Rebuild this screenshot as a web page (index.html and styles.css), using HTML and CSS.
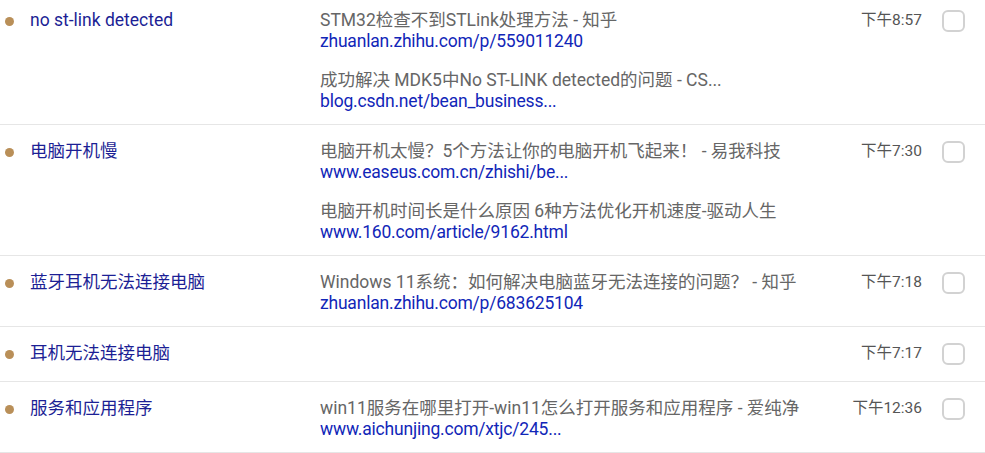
FILE: index.html
```html
<!DOCTYPE html>
<html lang="zh-CN">
<head>
<meta charset="utf-8">
<title>History</title>
<link rel="stylesheet" href="styles.css">
</head>
<body>
<div class="list">
  <div class="row">
    <span class="dot"></span>
    <div class="query">no st-link detected</div>
    <div class="results">
      <div class="result"><div class="rtitle">STM32检查不到STLink处理方法 - 知乎</div><div class="rlink">zhuanlan.zhihu.com/p/559011240</div></div>
      <div class="result"><div class="rtitle">成功解决 MDK5中No ST-LINK detected的问题 - CS...</div><div class="rlink">blog.csdn.net/bean_business...</div></div>
    </div>
    <div class="time">下午8:57</div>
    <span class="check"></span>
  </div>
  <div class="row">
    <span class="dot"></span>
    <div class="query">电脑开机慢</div>
    <div class="results">
      <div class="result"><div class="rtitle">电脑开机太慢？5个方法让你的电脑开机飞起来！ - 易我科技</div><div class="rlink">www.easeus.com.cn/zhishi/be...</div></div>
      <div class="result"><div class="rtitle">电脑开机时间长是什么原因 6种方法优化开机速度-驱动人生</div><div class="rlink">www.160.com/article/9162.html</div></div>
    </div>
    <div class="time">下午7:30</div>
    <span class="check"></span>
  </div>
  <div class="row">
    <span class="dot"></span>
    <div class="query">蓝牙耳机无法连接电脑</div>
    <div class="results">
      <div class="result"><div class="rtitle">Windows 11系统：如何解决电脑蓝牙无法连接的问题？ - 知乎</div><div class="rlink">zhuanlan.zhihu.com/p/683625104</div></div>
    </div>
    <div class="time">下午7:18</div>
    <span class="check"></span>
  </div>
  <div class="row">
    <span class="dot"></span>
    <div class="query">耳机无法连接电脑</div>
    <div class="results"></div>
    <div class="time">下午7:17</div>
    <span class="check"></span>
  </div>
  <div class="row">
    <span class="dot"></span>
    <div class="query">服务和应用程序</div>
    <div class="results">
      <div class="result"><div class="rtitle">win11服务在哪里打开-win11怎么打开服务和应用程序 - 爱纯净</div><div class="rlink">www.aichunjing.com/xtjc/245...</div></div>
    </div>
    <div class="time">下午12:36</div>
    <span class="check"></span>
  </div>
</div>
</body>
</html>
```
FILE: styles.css
```css
html, body {
  margin: 0;
  padding: 0;
  background: #ffffff;
}
body {
  font-family: Roboto, "Noto Sans CJK SC", sans-serif;
  font-size: 17.5px;
  line-height: 21px;
  overflow: hidden;
}
.list {
  margin-top: -6px;
}
.row {
  display: grid;
  grid-template-columns: 30px 290px 1fr auto 23px;
  align-items: start;
  padding: 16px 20px 12px 0;
  border-bottom: 1px solid #e6e6e6;
  min-height: 26px;
}
.dot {
  width: 9px;
  height: 9px;
  border-radius: 50%;
  background: #b98f58;
  margin: 7px 0 0 5px;
}
.query {
  color: #1c1f95;
}
.results {
  display: flex;
  flex-direction: column;
  gap: 18px;
  min-width: 0;
}
.rtitle {
  color: #666666;
  white-space: nowrap;
}
.rlink {
  color: #1126b8;
  white-space: nowrap;
  letter-spacing: -0.2px;
}
.time {
  color: #555555;
  font-size: 15.5px;
  margin-right: 20px;
  text-align: right;
}
.check {
  box-sizing: border-box;
  width: 23px;
  height: 22px;
  margin-top: 0;
  border: 2px solid #d2d2d2;
  border-radius: 6px;
}
```
